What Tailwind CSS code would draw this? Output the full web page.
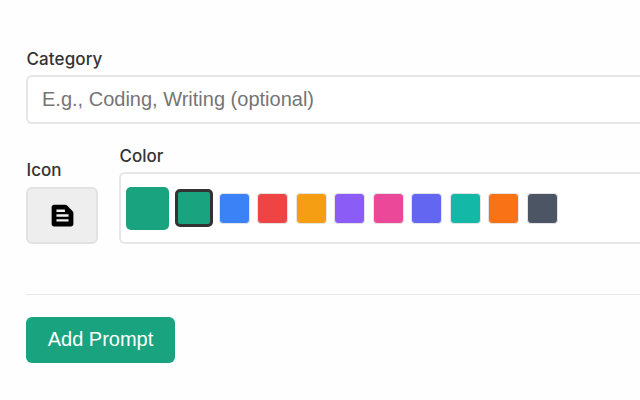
<!DOCTYPE html>
<html lang="en">
<head>
<meta charset="utf-8">
<title>Add Prompt</title>
<script src="https://cdn.jsdelivr.net/npm/@tailwindcss/browser@4"></script>
</head>
<body class="h-[400px] overflow-hidden bg-[#fefefe] font-[Inter,sans-serif] text-[#333]">
<form class="flex w-full flex-col pl-[26px] pt-[48px]">
  <label class="h-[27px] pl-[0.5px] pt-px text-[17px] leading-[21px] font-medium tracking-[0.1px]">Category</label>
  <input type="text" placeholder="E.g., Coding, Writing (optional)" class="h-[49px] w-full rounded-l-[6px] border-2 border-r-0 border-[#e6e6e6] bg-white px-[14px] font-['Liberation_Sans',sans-serif] text-[20px] placeholder:text-[#757575]">
  <div class="mt-[21px] flex items-end gap-[21px]">
    <div class="flex flex-col">
      <label class="h-[27px] pl-[0.5px] text-[17px] leading-[21px] font-medium">Icon</label>
      <button type="button" class="flex h-[57px] w-[72px] items-center justify-center rounded-[6px] border-2 border-[#e2e2e2] bg-[#eee]">
        <svg class="size-[29px]" viewBox="0 0 24 24" fill="#000"><path d="M20.41 8.41l-4.83-4.83c-.37-.37-.88-.58-1.41-.58H5c-1.1 0-2 .9-2 2v14c0 1.1.9 2 2 2h14c1.1 0 2-.9 2-2V9.83c0-.53-.21-1.04-.59-1.42zM7 7h7v2H7V7zm10 10H7v-2h10v2zm0-4H7v-2h10v2z"/></svg>
      </button>
    </div>
    <div class="flex min-w-0 flex-1 flex-col">
      <label class="h-[27px] pl-[0.5px] pt-px text-[17px] leading-[21px] font-medium">Color</label>
      <div class="flex h-[72px] items-center rounded-l-[6px] border-2 border-r-0 border-[#e6e6e6] bg-white pl-[5px]">
        <span class="h-[43px] w-[43px] rounded-[5px] bg-[#19a37f]"></span>
        <span class="mr-[6px] ml-[6px] h-[38px] w-[37.500px] rounded-[5px] border-3 border-[#333] bg-[#19a37f]"></span>
        <div class="flex gap-[7.550px]">
          <span class="size-[31px] rounded-[4px] border border-[#e4e4e4] bg-[#3b82f6]"></span>
          <span class="size-[31px] rounded-[4px] border border-[#e4e4e4] bg-[#ef4444]"></span>
          <span class="size-[31px] rounded-[4px] border border-[#e4e4e4] bg-[#f59e14]"></span>
          <span class="size-[31px] rounded-[4px] border border-[#e4e4e4] bg-[#8b5cf6]"></span>
          <span class="size-[31px] rounded-[4px] border border-[#e4e4e4] bg-[#ec4899]"></span>
          <span class="size-[31px] rounded-[4px] border border-[#e4e4e4] bg-[#6366f1]"></span>
          <span class="size-[31px] rounded-[4px] border border-[#e4e4e4] bg-[#14b8a6]"></span>
          <span class="size-[31px] rounded-[4px] border border-[#e4e4e4] bg-[#f97316]"></span>
          <span class="size-[31px] rounded-[4px] border border-[#e4e4e4] bg-[#4b5563]"></span>
        </div>
      </div>
    </div>
  </div>
  <div class="mt-[50px] border-t border-[#e8e8e8] pt-[22px]">
    <button type="submit" class="h-[46px] w-[149px] rounded-[6px] bg-[#19a37f] pb-[2px] font-['Liberation_Sans',sans-serif] text-[20px] text-white">Add Prompt</button>
  </div>
</form>
</body>
</html>
